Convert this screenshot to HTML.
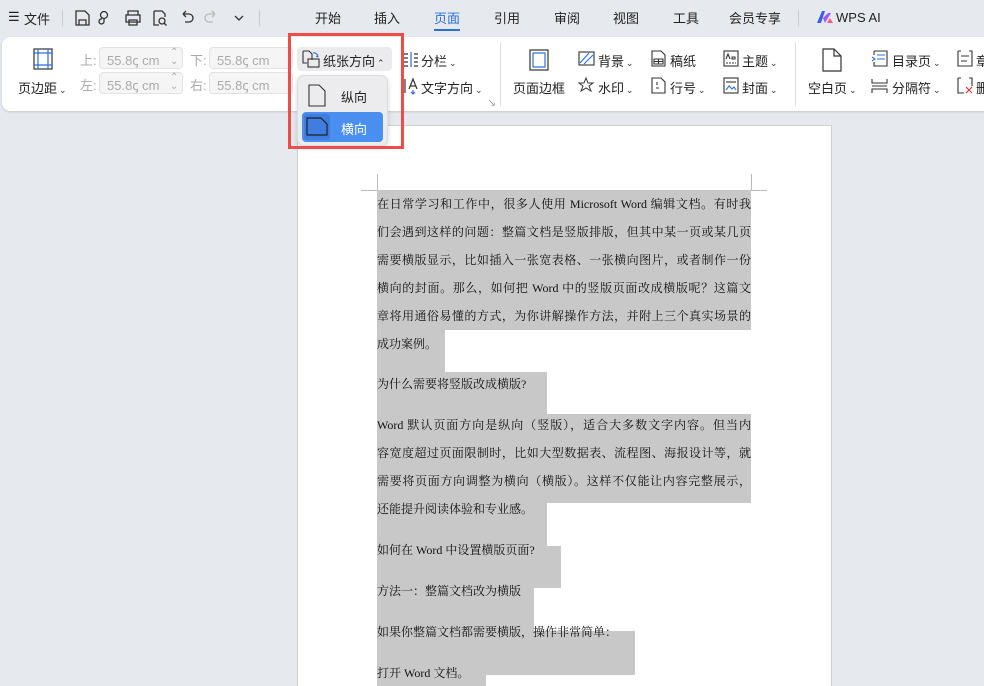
<!DOCTYPE html>
<html><head><meta charset="utf-8"><style>
*{margin:0;padding:0;box-sizing:border-box}
html,body{width:984px;height:686px;overflow:hidden}
body{background:#e6e9ee;font-family:"Liberation Sans","Noto Sans CJK SC",sans-serif;position:relative;color:#222}
.a{position:absolute;white-space:nowrap}
.t{font-size:13px;color:#222}
.tab{position:absolute;top:8px;font-size:13px;color:#222}
.ic{position:absolute}
.inp{position:absolute;width:84px;height:22px;border:1px solid #e2e2e2;background:#f5f5f5;border-radius:4px;color:#aaa;font-size:13px;padding:3px 0 0 7px}
.lbl{position:absolute;font-size:13px;color:#aaa}
.dd{font-size:9px;color:#333;margin-left:2px}
.page{position:absolute;left:297px;top:125px;width:535px;height:580px;background:#fff;border:1px solid #cfcfcf}
.hl{position:absolute;left:377px;background:#c8c8c8}
.ln{position:absolute;left:377px;width:374px;font-family:"Liberation Serif","Noto Serif CJK SC",serif;font-size:12px;color:#111;text-align:justify;text-align-last:justify;white-space:nowrap;height:28px;line-height:28px}
.ln.l{text-align-last:left;width:auto}
</style></head><body>
<div class="a t" style="left:8px;top:9px;">☰</div>
<div class="a t" style="left:24px;top:9px;">文件</div>
<div class="a" style="left:62px;top:10px;width:1px;height:16px;background:#ccc"></div>
<svg class="ic" style="left:74px;top:9px" width="180" height="18" fill="none" stroke="#333" stroke-width="1.3">
<path d="M2 2h9l4 4v10H2z M5 16v-5h7v5"/>
<circle cx="30" cy="6" r="3.5"/><path d="M30 9.5v3a2.5 2.5 0 1 1-2-2.5"/>
<path d="M54 6V2h10v4 M52 6h14v7H52z M55 11h8v5h-8z"/>
<path d="M80 2h8l3 3v3 M80 2v14h5"/><circle cx="88" cy="12" r="3"/><path d="M90 14l2.5 2.5"/>
<path d="M109 5h6a4 4 0 0 1 0 8h-4 M109 5l3-3 M109 5l3 3"/>
<path d="M141 5h-6a4 4 0 0 0 0 8h4 M141 5l-3-3 M141 5l-3 3" stroke="#bbb"/>
<path d="M161 7l4 4 4-4"/>
</svg>
<div class="a" style="left:259px;top:10px;width:1px;height:16px;background:#ccc"></div>
<div class="tab" style="left:315px">开始</div>
<div class="tab" style="left:374px">插入</div>
<div class="tab" style="left:434px;color:#2a6fe0">页面</div>
<div class="a" style="left:434px;top:29px;width:26px;height:2px;background:#2a6fe0"></div>
<div class="tab" style="left:494px">引用</div>
<div class="tab" style="left:554px">审阅</div>
<div class="tab" style="left:613px">视图</div>
<div class="tab" style="left:673px">工具</div>
<div class="tab" style="left:729px">会员专享</div>
<div class="a" style="left:798px;top:10px;width:1px;height:16px;background:#ccc"></div>
<svg class="ic" style="left:816px;top:10px" width="18" height="14"><path d="M1 13L6 1h3l-4 12z" fill="#3a5cf0"/><path d="M7 8l5-5h3l-6 10z" fill="#a35cf0"/><path d="M11 13l3-5 3 5z" fill="#f05c8a"/></svg>
<div class="tab" style="left:836px;top:10px;font-size:13px">WPS AI</div>

<div class="a" style="left:2px;top:37px;width:990px;height:74px;background:#fff;border-radius:8px;box-shadow:0 1px 2px rgba(0,0,0,.15)"></div>
<svg class="ic" style="left:33px;top:48px" width="20" height="22" fill="none"><rect x="1" y="1" width="18" height="20" stroke="#333" stroke-width="1.2"/><path d="M5 1v20M15 1v20M1 5h18M1 17h18" stroke="#2a6fe0" stroke-width="1.2"/></svg>
<div class="a t" style="left:18px;top:78px">页边距<span class="dd">⌄</span></div>
<div class="lbl" style="left:80px;top:50px">上:</div><div class="inp" style="left:99px;top:47px">55.8ꞔ cm</div>
<div class="lbl" style="left:190px;top:50px">下:</div><div class="inp" style="left:209px;top:47px">55.8ꞔ cm</div>
<div class="lbl" style="left:80px;top:75px">左:</div><div class="inp" style="left:99px;top:72px">55.8ꞔ cm</div>
<div class="lbl" style="left:190px;top:75px">右:</div><div class="inp" style="left:209px;top:72px">55.8ꞔ cm</div>
<div class="a" style="left:170px;top:48px;color:#aaa;font-size:10px;line-height:9px">⌃<br>⌄</div>
<div class="a" style="left:170px;top:73px;color:#aaa;font-size:10px;line-height:9px">⌃<br>⌄</div>

<svg class="ic" style="left:403px;top:51px" width="16" height="16" fill="none" stroke="#333" stroke-width="1.2"><path d="M1 3h4M1 7h4M1 11h4M1 15h4M11 3h4M11 7h4M11 11h4M11 15h4"/><path d="M8 1v15" stroke="#2a6fe0"/></svg>
<div class="a t" style="left:421px;top:51px">分栏<span class="dd">⌄</span></div>
<svg class="ic" style="left:403px;top:77px" width="16" height="18" fill="none" stroke="#333" stroke-width="1.2"><path d="M2 2v14M6 12l4-10 4 10M7.5 9h5"/><path d="M10 13v4M8 15l2 2 2-2" stroke="#2a6fe0"/></svg>
<div class="a t" style="left:421px;top:78px">文字方向<span class="dd">⌄</span></div>
<div class="a" style="left:488px;top:98px;font-size:8px;color:#777">↘</div>
<div class="a" style="left:500px;top:42px;width:1px;height:64px;background:#ddd"></div>

<svg class="ic" style="left:529px;top:49px" width="20" height="22" fill="none" stroke="#333" stroke-width="1.2"><rect x="1" y="1" width="18" height="20"/><rect x="4" y="4" width="12" height="14" stroke="#2a6fe0"/></svg>
<div class="a t" style="left:513px;top:78px">页面边框</div>

<svg class="ic" style="left:578px;top:51px" width="17" height="15" fill="none" stroke="#333" stroke-width="1.1"><rect x="1" y="1" width="15" height="13"/><path d="M2 12L11 2M6 13L15 4" stroke="#2a6fe0"/></svg>
<div class="a t" style="left:598px;top:51px">背景<span class="dd">⌄</span></div>
<svg class="ic" style="left:577px;top:77px" width="18" height="17" fill="none" stroke="#333" stroke-width="1"><path d="M9 1l2 5h5l-4 3 2 5-5-3-5 3 2-5-4-3h5z"/></svg>
<div class="a t" style="left:598px;top:78px">水印<span class="dd">⌄</span></div>

<svg class="ic" style="left:651px;top:50px" width="15" height="17" fill="none" stroke="#333" stroke-width="1.1"><path d="M1 1h9l4 4v11H1z M3 9h9v5H3zM3 11.5h9M7.5 9v5"/></svg>
<div class="a t" style="left:670px;top:51px">稿纸</div>
<svg class="ic" style="left:651px;top:77px" width="15" height="17" fill="none" stroke="#333" stroke-width="1.1"><path d="M1 1h9l4 4v11H1z M6 5v3M5 11h3"/></svg>
<div class="a t" style="left:670px;top:78px">行号<span class="dd">⌄</span></div>

<svg class="ic" style="left:723px;top:50px" width="16" height="17" fill="none" stroke="#333" stroke-width="1.1"><rect x="1" y="1" width="14" height="15"/><path d="M3 9l2-5 2 5M9 7h3v2h-3z"/><path d="M3 13h10" stroke-dasharray="2 1"/></svg>
<div class="a t" style="left:742px;top:51px">主题<span class="dd">⌄</span></div>
<svg class="ic" style="left:723px;top:77px" width="16" height="17" fill="none" stroke="#333" stroke-width="1.1"><rect x="1" y="1" width="14" height="15"/><path d="M3 5h10"/><path d="M3 13l3-4 3 3 2-2 2 3" stroke="#2a6fe0"/></svg>
<div class="a t" style="left:742px;top:78px">封面<span class="dd">⌄</span></div>
<div class="a" style="left:795px;top:42px;width:1px;height:64px;background:#ddd"></div>

<svg class="ic" style="left:822px;top:48px" width="20" height="24" fill="none" stroke="#333" stroke-width="1.2"><path d="M1 1h11l7 7v15H1z M12 1v7h7"/></svg>
<div class="a t" style="left:808px;top:78px">空白页<span class="dd">⌄</span></div>
<svg class="ic" style="left:871px;top:50px" width="17" height="17" fill="none" stroke="#333" stroke-width="1.1"><path d="M3 1h13v15H3v-4 M3 5V1"/><path d="M1 7l3 2-3 2M6 9h8M6 5h8" stroke="#2a6fe0"/></svg>
<div class="a t" style="left:892px;top:51px">目录页<span class="dd">⌄</span></div>
<svg class="ic" style="left:871px;top:78px" width="17" height="16" fill="none" stroke="#333" stroke-width="1.1"><path d="M1 1v4h15V1M1 8h15M1 15v-4h15v4"/></svg>
<div class="a t" style="left:892px;top:78px">分隔符<span class="dd">⌄</span></div>
<svg class="ic" style="left:957px;top:50px" width="16" height="17" fill="none" stroke="#333" stroke-width="1.1"><path d="M1 1h3M12 1h3v15H1V1 M4 6h8M4 11h6"/></svg>
<div class="a t" style="left:976px;top:51px">章</div>
<svg class="ic" style="left:957px;top:77px" width="16" height="17" fill="none" stroke="#333" stroke-width="1.1"><path d="M1 1h3M12 1h3v8M1 1v15h6"/><path d="M9 10l6 6M15 10l-6 6" stroke="#e03030"/></svg>
<div class="a t" style="left:976px;top:78px">删</div>

<div class="page"></div>
<div class="a" style="left:377px;top:174px;width:1px;height:16px;background:#bbb"></div>
<div class="a" style="left:361px;top:190px;width:16px;height:1px;background:#bbb"></div>
<div class="a" style="left:751px;top:174px;width:1px;height:16px;background:#bbb"></div>
<div class="a" style="left:751px;top:190px;width:16px;height:1px;background:#bbb"></div>

<div class="hl" style="top:190px;width:374px;height:140px"></div>
<div class="hl" style="top:330px;width:68px;height:42px"></div>
<div class="hl" style="top:372px;width:170px;height:42px"></div>
<div class="hl" style="top:414px;width:374px;height:89px"></div>
<div class="hl" style="top:503px;width:170px;height:43px"></div>
<div class="hl" style="top:546px;width:184px;height:42px"></div>
<div class="hl" style="top:588px;width:157px;height:43px"></div>
<div class="hl" style="top:631px;width:258px;height:44px"></div>
<div class="hl" style="top:675px;width:109px;height:20px"></div>

<div class="ln" style="top:190px">在日常学习和工作中，很多人使用 Microsoft Word 编辑文档。有时我</div>
<div class="ln" style="top:218px">们会遇到这样的问题：整篇文档是竖版排版，但其中某一页或某几页</div>
<div class="ln" style="top:246px">需要横版显示，比如插入一张宽表格、一张横向图片，或者制作一份</div>
<div class="ln" style="top:274px">横向的封面。那么，如何把 Word 中的竖版页面改成横版呢？这篇文</div>
<div class="ln" style="top:302px">章将用通俗易懂的方式，为你讲解操作方法，并附上三个真实场景的</div>
<div class="ln l" style="top:330px">成功案例。</div>
<div class="ln l" style="top:370px">为什么需要将竖版改成横版?</div>
<div class="ln" style="top:411px">Word 默认页面方向是纵向（竖版），适合大多数文字内容。但当内</div>
<div class="ln" style="top:439px">容宽度超过页面限制时，比如大型数据表、流程图、海报设计等，就</div>
<div class="ln" style="top:467px">需要将页面方向调整为横向（横版）。这样不仅能让内容完整展示，</div>
<div class="ln l" style="top:495px">还能提升阅读体验和专业感。</div>
<div class="ln l" style="top:536px">如何在 Word 中设置横版页面?</div>
<div class="ln l" style="top:577px">方法一：整篇文档改为横版</div>
<div class="ln l" style="top:618px">如果你整篇文档都需要横版，操作非常简单：</div>
<div class="ln l" style="top:659px">打开 Word 文档。</div>

<div class="a" style="left:297px;top:47px;width:95px;height:24px;background:#ebebed;border-radius:4px"></div>
<svg class="ic" style="left:302px;top:50px" width="18" height="18" fill="none" stroke="#333" stroke-width="1.1"><path d="M1 1h6l3 3v6 M1 1v12h4"/><rect x="6" y="9" width="11" height="8"/><path d="M11 3a4 4 0 0 1 5 4M16 7l-2-1" stroke="#2a6fe0"/></svg>
<div class="a t" style="left:323px;top:51px">纸张方向<span class="dd">⌃</span></div>
<div class="a" style="left:297px;top:75px;width:91px;height:71px;background:#ececee;border-radius:7px;box-shadow:0 2px 6px rgba(0,0,0,.15);border:1px solid #ddd"></div>
<svg class="ic" style="left:308px;top:84px" width="18" height="23" fill="none" stroke="#333" stroke-width="1.1"><path d="M1 1h10l6 6v15H1z"/></svg>
<div class="a t" style="left:341px;top:87px">纵向</div>
<div class="a" style="left:302px;top:112px;width:81px;height:30px;background:#4a8ef0;border-radius:4px"></div>
<div class="a" style="left:304px;top:114px;width:26px;height:26px;background:#3f7ee0;border-radius:3px"></div>
<svg class="ic" style="left:306px;top:117px" width="22" height="19" fill="none" stroke="#222" stroke-width="1.2"><path d="M1 1h14l6 6v11H1z"/></svg>
<div class="a t" style="left:341px;top:119px;color:#fff">横向</div>
<div class="a" style="left:288px;top:33px;width:116px;height:116px;border:3px solid #ee4b4b"></div>
</body></html>
